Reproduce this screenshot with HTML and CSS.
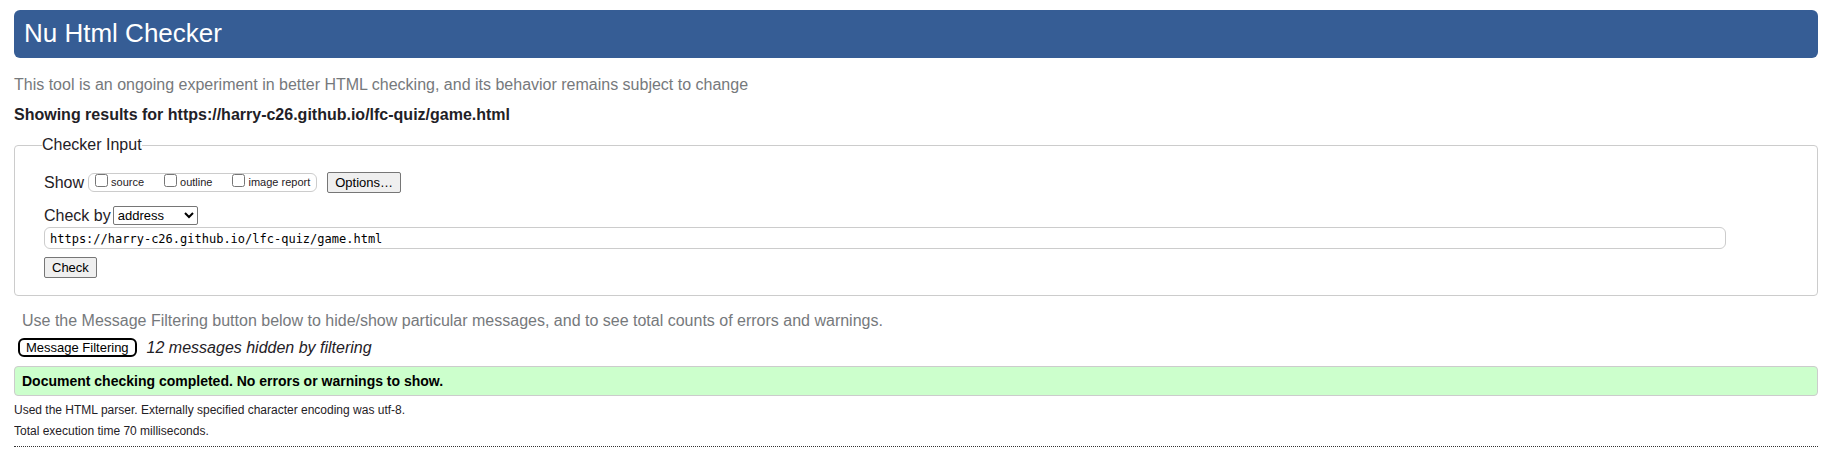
FILE: index.html
```html
<!DOCTYPE html>
<html lang="en">
<head>
<meta charset="utf-8">
<title>Nu Html Checker</title>
<link rel="stylesheet" href="styles.css">
</head>
<body>
<header class="banner"><h1 class="banner-title">Nu Html Checker</h1></header>
<main>
<p class="note">This tool is an ongoing experiment in better HTML checking, and its behavior remains subject to change</p>
<h2 class="results-title">Showing results for https://harry-c26.github.io/lfc-quiz/game.html</h2>
<form>
<fieldset class="panel">
<legend class="panel-legend">Checker Input</legend>
<div class="show-row">
<span>Show</span>
<div class="show-options">
<label class="check"><input class="check-box" type="checkbox"><span>source</span></label>
<label class="check"><input class="check-box" type="checkbox"><span>outline</span></label>
<label class="check"><input class="check-box" type="checkbox"><span>image report</span></label>
</div>
<button class="button options-button" type="button">Options…</button>
</div>
<div class="method-row">
<label for="method">Check by</label>
<select class="method" id="method"><option>address</option><option>file upload</option><option>text input</option></select>
</div>
<input class="address" type="url" aria-label="Address" value="https://harry-c26.github.io/lfc-quiz/game.html">
<button class="button check-button" type="submit">Check</button>
</fieldset>
</form>
<p class="note filter-note">Use the Message Filtering button below to hide/show particular messages, and to see total counts of errors and warnings.</p>
<div class="filter-row">
<button class="filter-button" type="button">Message Filtering</button>
<em>12 messages hidden by filtering</em>
</div>
<p class="success">Document checking completed. No errors or warnings to show.</p>
<div class="details">
<p class="detail">Used the HTML parser. Externally specified character encoding was utf-8.</p>
<p class="detail">Total execution time 70 milliseconds.</p>
</div>
</main>
</body>
</html>
```
FILE: styles.css
```css
* {
  box-sizing: border-box;
}

body {
  margin: 10px 13px 10px 14px;
  background: #fff;
  color: #1f2126;
  font: 16px/20px "Liberation Sans", Arial, sans-serif;
}

h1, h2, p {
  margin: 0;
}

button, select, input {
  font-family: inherit;
  color: #000;
}

.banner {
  padding: 7px 10px 9px;
  border-radius: 6px;
  background: #365d95;
}

.banner-title {
  color: #fff;
  font-size: 26px;
  font-weight: normal;
  line-height: 32px;
}

.note {
  margin-top: 17px;
  color: #76797c;
}

.results-title {
  margin: 10px 0;
  font-size: 16px;
}

.panel {
  display: flex;
  flex-direction: column;
  align-items: flex-start;
  min-width: 0;
  margin: 0;
  padding: 17px 91px 17px 29px;
  border: 1px solid #ccc;
  border-radius: 4px;
}

.panel-legend {
  margin-left: -2px;
  padding: 0;
}

.show-row {
  display: flex;
  align-items: center;
  height: 21px;
}

.show-options {
  display: flex;
  gap: 20px;
  margin: 0 10px 0 4px;
  padding: 0 6px;
  border: 1px solid #ccc;
  border-radius: 6px;
  font-size: 11px;
  line-height: 17px;
}

.check {
  display: flex;
  gap: 3px;
}

.check-box {
  width: 13px;
  height: 13px;
  margin: 0;
}

.button {
  height: 21px;
  padding: 0 7px;
  border: 1px solid #767676;
  border-radius: 2px;
  background: #efefef;
  font-size: 13px;
}

.method-row {
  display: flex;
  gap: 2px;
  margin-top: 13px;
}

.method {
  width: 85px;
  height: 19px;
  border: 1px solid #767676;
  border-radius: 2px;
  background: #fff;
  font-size: 13px;
}

.address {
  width: 100%;
  height: 22px;
  margin: 1px 0 8px;
  padding: 3px 5px 1px;
  border: 1px solid #ccc;
  border-radius: 6px;
  font: 12px "DejaVu Sans Mono", monospace;
}

.filter-note {
  margin: 15px 0 7px 8px;
}

.filter-row {
  display: flex;
  align-items: center;
  gap: 10px;
  margin-left: 4px;
  line-height: 19px;
}

.filter-button {
  height: 19px;
  padding: 0 6px;
  border: 2px solid #000;
  border-radius: 6px;
  background: #fff;
  font-size: 13px;
  line-height: 15px;
}

.success {
  margin-top: 9px;
  padding: 5px 7px;
  border: 1px solid #ccc;
  border-radius: 4px;
  background: #cfc;
  color: #000;
  font-size: 14px;
  font-weight: bold;
  line-height: 18px;
}

.details {
  display: grid;
  gap: 5px;
  margin-top: 6px;
  padding-bottom: 7px;
  border-bottom: 1px dotted #333;
}

.detail {
  font-size: 12px;
  line-height: 16px;
}
```
